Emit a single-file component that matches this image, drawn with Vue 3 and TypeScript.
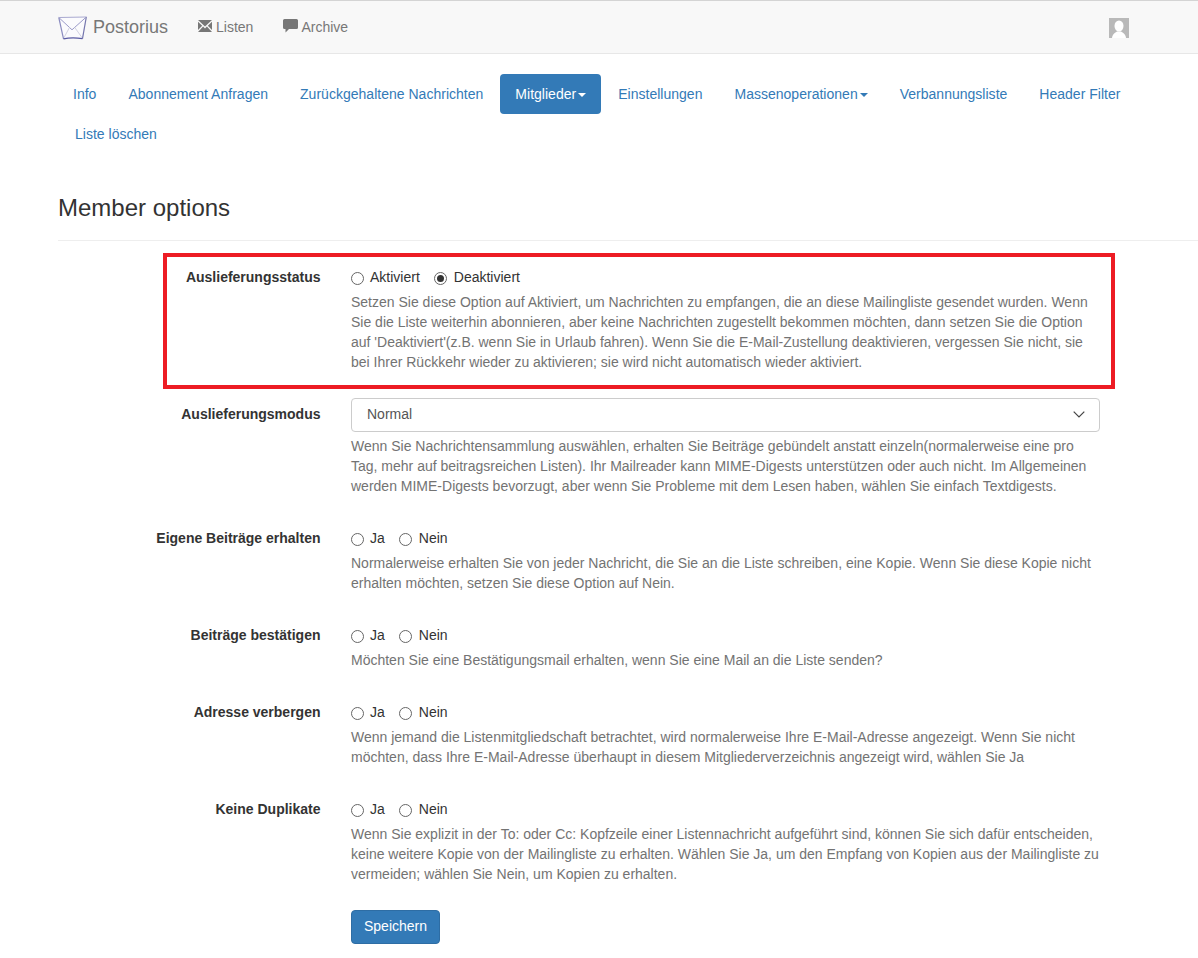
<script setup lang="ts">
interface Opt { label: string; help: string[]; choices?: string[]; checked?: number; select?: string; highlight?: boolean }
const tabs = [
  { label: 'Info' },
  { label: 'Abonnement Anfragen' },
  { label: 'Zurückgehaltene Nachrichten' },
  { label: 'Mitglieder', active: true, caret: true },
  { label: 'Einstellungen' },
  { label: 'Massenoperationen', caret: true },
  { label: 'Verbannungsliste' },
  { label: 'Header Filter' },
  { label: 'Liste löschen' },
]
const options: Opt[] = [
  {
    label: 'Auslieferungsstatus', choices: ['Aktiviert', 'Deaktiviert'], checked: 1, highlight: true,
    help: ["Setzen Sie diese Option auf Aktiviert, um Nachrichten zu empfangen, die an diese Mailingliste gesendet wurden. Wenn Sie die Liste weiterhin abonnieren, aber keine Nachrichten zugestellt bekommen möchten, dann setzen Sie die Option auf 'Deaktiviert'(z.B. wenn Sie in Urlaub fahren). Wenn Sie die E-Mail-Zustellung deaktivieren, vergessen Sie nicht, sie bei Ihrer Rückkehr wieder zu aktivieren; sie wird nicht automatisch wieder aktiviert."],
  },
  {
    label: 'Auslieferungsmodus', select: 'Normal',
    help: ['Wenn Sie Nachrichtensammlung auswählen, erhalten Sie Beiträge gebündelt anstatt einzeln(normalerweise eine pro Tag, mehr auf beitragsreichen Listen). Ihr Mailreader kann MIME-Digests unterstützen oder auch nicht. Im Allgemeinen werden MIME-Digests bevorzugt, aber wenn Sie Probleme mit dem Lesen haben, wählen Sie einfach Textdigests.'],
  },
  {
    label: 'Eigene Beiträge erhalten', choices: ['Ja', 'Nein'],
    help: ['Normalerweise erhalten Sie von jeder Nachricht, die Sie an die Liste schreiben, eine Kopie. Wenn Sie diese Kopie nicht erhalten möchten, setzen Sie diese Option auf Nein.'],
  },
  {
    label: 'Beiträge bestätigen', choices: ['Ja', 'Nein'],
    help: ['Möchten Sie eine Bestätigungsmail erhalten, wenn Sie eine Mail an die Liste senden?'],
  },
  {
    label: 'Adresse verbergen', choices: ['Ja', 'Nein'],
    help: ['Wenn jemand die Listenmitgliedschaft betrachtet, wird normalerweise Ihre E-Mail-Adresse angezeigt. Wenn Sie nicht möchten, dass Ihre E-Mail-Adresse überhaupt in diesem Mitgliederverzeichnis angezeigt wird, wählen Sie Ja'],
  },
  {
    label: 'Keine Duplikate', choices: ['Ja', 'Nein'],
    help: ['Wenn Sie explizit in der To: oder Cc: Kopfzeile einer Listennachricht aufgeführt sind, können Sie sich dafür entscheiden, keine weitere Kopie von der Mailingliste zu erhalten. Wählen Sie Ja, um den Empfang von Kopien aus der Mailingliste zu vermeiden; wählen Sie Nein, um Kopien zu erhalten.'],
  },
]
</script>

<template>
  <div class="page">
    <nav class="navbar">
      <a class="brand">
        <svg class="logo" width="29" height="24" viewBox="0 0 29 24" fill="none">
          <path d="M.8 1.500 L28.300 1 L24.500 22.600 Q14 21 5.500 22.800 Z" fill="#fbfbfd" />
          <path d="M.8 1.500 L14 13.800 L28.300 1" stroke="#9a9ac8" stroke-width="1" />
          <path d="M5.500 22.500 L11.500 11.500 M24.500 22.300 L16.800 11.500" stroke="#d2d2e2" stroke-width="1" />
          <path d="M.8 1.500 L5.500 22.800" stroke="#8b8cc0" stroke-width="1.200" />
          <path d="M28.300 1 L24.500 22.600" stroke="#7475ad" stroke-width="1.200" />
          <path d="M.8 1.500 L28.300 1" stroke="#a9a9d0" stroke-width="1" />
          <path d="M5.500 22.800 Q14 21 24.500 22.600" stroke="#5a5ba3" stroke-width="1.300" />
        </svg>
        Postorius
      </a>
      <a class="nav-link">
        <svg width="16" height="12" viewBox="0 0 16 12"><path fill="#777" d="M0 0h14L7 6.500zM0 1.800V10l4.200-4.300zM14 1.800V10L9.800 5.700zM5.100 6.600 7 8.400l1.900-1.800L14 12H0z" /></svg>
        Listen
      </a>
      <a class="nav-link">
        <svg width="16" height="14" viewBox="0 0 16 14"><path fill="#777" d="M1.500 0h12A1.500 1.500 0 0 1 15 1.500v7a1.500 1.500 0 0 1-1.500 1.500H6l-3.500 3.500V10h-1A1.500 1.500 0 0 1 0 8.500v-7A1.500 1.500 0 0 1 1.500 0z" /></svg>
        Archive
      </a>
      <span class="spacer"></span>
      <svg class="avatar" width="20" height="20" viewBox="0 0 20 20">
        <rect width="20" height="20" fill="#b9b9b9" />
        <ellipse cx="10" cy="8" rx="4.500" ry="5.500" fill="#fff" />
        <path fill="#fff" d="M3 20c.5-4 3-5.500 5-6.500h4c2 1 4.500 2.500 5 6.500z" />
      </svg>
    </nav>

    <ul class="pills">
      <li v-for="t in tabs" :key="t.label" :class="{ active: t.active }">
        <a>{{ t.label }}<span v-if="t.caret" class="caret"></span></a>
      </li>
    </ul>

    <h1 class="title">Member options</h1>

    <form class="form" @submit.prevent>
      <div v-for="o in options" :key="o.label" class="group" :class="{ highlighted: o.highlight, selectgroup: o.select }">
        <div v-if="o.highlight" class="redbox"></div>
        <label class="lbl">{{ o.label }}</label>
        <div class="ctl">
          <div v-if="o.select" class="select">
            <span>{{ o.select }}</span>
            <svg width="12" height="7" viewBox="0 0 12 7" fill="none"><path d="M.7.7 6 6l5.300-5.300" stroke="#444" stroke-width="1.200" /></svg>
          </div>
          <div v-else class="choices">
            <label v-for="(c, i) in o.choices" :key="c" class="choice">
              <span class="radio" :class="{ on: o.checked === i }"></span>{{ c }}
            </label>
          </div>
          <p v-for="(h, i) in o.help" :key="i" class="help">{{ h }}</p>
        </div>
      </div>
      <div class="actions">
        <button class="btn" type="submit">Speichern</button>
      </div>
    </form>
  </div>
</template>

<style>
html, body { margin: 0; background: #fff; }
</style>

<style scoped>
.page {
  font-family: "Liberation Sans", Arial, sans-serif;
  font-size: 14px;
  line-height: 20px;
  color: #333;
  height: 958px;
  overflow: hidden;
}
.navbar {
  box-sizing: border-box;
  height: 54px;
  background: #f8f8f8;
  border-top: 1px solid #d4d4d4;
  border-bottom: 1px solid #e7e7e7;
  display: flex;
  align-items: center;
  padding: 0 69px 0 58px;
}
.brand {
  display: flex;
  align-items: center;
  font-size: 18px;
  color: #777;
  gap: 6px;
  margin-right: 30px;
}
.logo { display: block; margin-top: 1px; }
.nav-link {
  display: flex;
  align-items: center;
  color: #777;
  gap: 2px;
  margin-right: 30px;
}
.nav-link svg { margin-top: -3px; }
.spacer { flex: 1; }
.avatar { display: block; margin-top: 2px; }
.pills {
  list-style: none;
  margin: 20px 0 0;
  padding: 0 58px;
  display: flex;
  flex-wrap: wrap;
  letter-spacing: 0.015px;
}
.pills li + li { margin-left: 2px; }
.pills a {
  display: block;
  padding: 10px 15px;
  color: #337ab7;
  border-radius: 4px;
}
.pills li.active a { background: #337ab7; color: #fff; }
.caret {
  display: inline-block;
  width: 0;
  height: 0;
  margin-left: 2px;
  vertical-align: middle;
  border-top: 4px solid;
  border-left: 4px solid transparent;
  border-right: 4px solid transparent;
}
.title {
  font-size: 24px;
  font-weight: 500;
  line-height: 26px;
  margin: 41px 0 0 58px;
  padding-bottom: 19px;
  border-bottom: 1px solid #eee;
}
.form { margin-top: 19px; }
.group {
  position: relative;
  display: flex;
  margin-bottom: 25px;
  padding-top: 7px;
}
.group.selectgroup {
  padding-top: 0;
  margin-top: 26px;
}
.highlighted { margin-bottom: 0; }
.redbox {
  position: absolute;
  left: 163px;
  top: -7px;
  width: 952px;
  height: 136px;
  box-sizing: border-box;
  border: 4px solid #ed1c24;
  pointer-events: none;
}
.lbl {
  width: 320.500px;
  flex: none;
  box-sizing: border-box;
  text-align: right;
  font-weight: 700;
}
.ctl {
  margin-left: 30.500px;
  width: 749px;
  flex: none;
}
.group.selectgroup .lbl { padding-top: 6px; }
.select {
  box-sizing: border-box;
  height: 34px;
  border: 1px solid #ccc;
  border-radius: 4px;
  background: #fff;
  color: #555;
  display: flex;
  align-items: center;
  justify-content: space-between;
  padding: 0 14px 2px 15px;
}
.choices { display: flex; gap: 14px; }
.choice { display: flex; align-items: center; gap: 6px; }
.choice + .choice { gap: 7px; }
.radio {
  box-sizing: border-box;
  width: 13px;
  height: 13px;
  border: 1px solid #666;
  border-radius: 50%;
  margin-top: 2px;
  background: #fff;
  position: relative;
}
.radio.on::after {
  content: "";
  position: absolute;
  left: 2px;
  top: 2px;
  width: 7px;
  height: 7px;
  border-radius: 50%;
  background: #333;
}
.help {
  margin: 5px 0 0;
  color: #737373;
}
.selectgroup .help { margin-top: 4px; }
.actions { margin: 26px 0 0 351px; }
.btn {
  font: inherit;
  height: 34px;
  width: 89px;
  padding: 0 0 2px;
  color: #fff;
  background: #337ab7;
  border: 1px solid #2e6da4;
  border-radius: 4px;
}
</style>
